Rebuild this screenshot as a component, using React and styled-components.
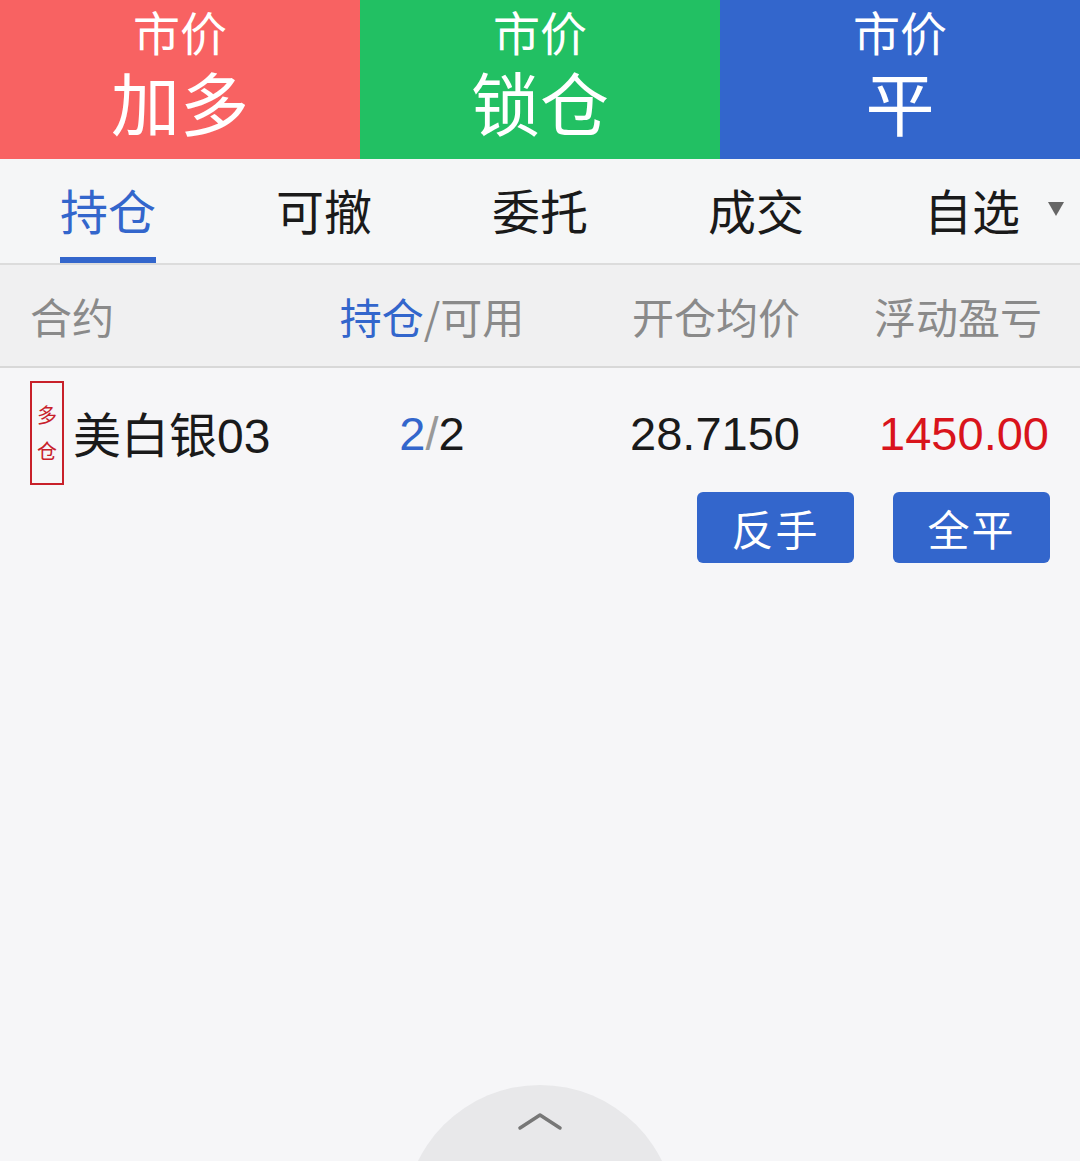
import React from "react";
import styled, { createGlobalStyle } from "styled-components";

const Global = createGlobalStyle`
  html, body { margin: 0; padding: 0; background: #f6f6f8; }
  body { font-family: "Liberation Sans", "Noto Sans CJK SC", sans-serif; }
  * { box-sizing: border-box; }
`;

const Page = styled.div`
  width: 1080px;
  height: 1161px;
  background: #f6f6f8;
  display: flex;
  flex-direction: column;
  position: relative;
  overflow: hidden;
`;

const ActionBar = styled.div`
  display: grid;
  grid-template-columns: repeat(3, 1fr);
  height: 159px;
`;

const ActionButton = styled.div`
  background: ${(p) => p.$bg};
  color: #fff;
  display: flex;
  flex-direction: column;
  align-items: center;
  padding-top: 8px;
  gap: 13px;
  font-family: "Noto Sans CJK SC", sans-serif;
`;

const ActionSmall = styled.div`
  font-size: 47px;
  line-height: 46px;
`;

const ActionBig = styled.div`
  font-size: 69px;
  line-height: 68px;
`;

const Tabs = styled.div`
  display: grid;
  grid-template-columns: repeat(5, 1fr);
  height: 106px;
  background: #f5f6f7;
  border-bottom: 2px solid #dcdcdc;
`;

const Tab = styled.div`
  position: relative;
  display: flex;
  align-items: center;
  justify-content: center;
  font-family: "Noto Sans CJK SC", sans-serif;
  font-size: 48px;
  color: ${(p) => (p.$active ? "#3366cc" : "#1a1a1a")};
  padding-bottom: 4px;
  &::after {
    content: "";
    display: ${(p) => (p.$active ? "block" : "none")};
    position: absolute;
    bottom: 0;
    left: 60px;
    width: 96px;
    height: 6px;
    background: #3366cc;
  }
`;

const Caret = styled.span`
  position: absolute;
  right: 16px;
  top: 43px;
  width: 0;
  height: 0;
  border-left: 8px solid transparent;
  border-right: 8px solid transparent;
  border-top: 14px solid #666;
`;

const Row = styled.div`
  display: grid;
  grid-template-columns: 282px 240px 248px 1fr;
  padding: 0 31px 0 30px;
  align-items: center;
`;

const HeaderRow = styled(Row)`
  height: 103px;
  background: #f0f0f1;
  border-bottom: 2px solid #d8d8d8;
  color: #8a8a8a;
  font-family: "Noto Sans CJK SC", sans-serif;
  font-size: 42px;
  padding-right: 38px;
`;

const Cell = styled.div`
  text-align: ${(p) => p.$align || "left"};
  white-space: nowrap;
`;

const Blue = styled.span`
  color: #3366cc;
`;

const DataRow = styled(Row)`
  padding-top: 13px;
  font-size: 47px;
  color: #1a1a1a;
  align-items: center;
`;

const NameCell = styled.div`
  display: flex;
  align-items: center;
  gap: 9px;
`;

const Badge = styled.div`
  width: 34px;
  height: 104px;
  border: 2px solid #c8202a;
  color: #c8202a;
  display: flex;
  flex-direction: column;
  align-items: center;
  justify-content: center;
  font-family: "Noto Sans CJK SC", sans-serif;
  font-size: 20px;
  line-height: 36px;
`;

const Name = styled.span`
  font-family: "Liberation Sans", "Noto Sans CJK SC", sans-serif;
  font-size: 48px;
  margin-top: -2px;
`;

const Slash = styled.span`
  color: #999;
`;

const Red = styled.span`
  color: #d9141c;
`;

const ButtonRow = styled.div`
  display: flex;
  justify-content: flex-end;
  gap: 39px;
  padding: 7px 30px 0 0;
`;

const SmallButton = styled.div`
  width: 157px;
  height: 71px;
  border-radius: 6px;
  background: #3366cc;
  color: #fff;
  display: flex;
  align-items: center;
  justify-content: center;
  font-family: "Noto Sans CJK SC", sans-serif;
  font-size: 42px;
  letter-spacing: 2px;
`;

const Pull = styled.div`
  position: absolute;
  left: 404px;
  top: 1085px;
  width: 272px;
  height: 272px;
  border-radius: 50%;
  background: #e8e8ea;
  display: flex;
  justify-content: center;
  padding-top: 26px;
`;

export default function App() {
  return (
    <Page>
      <Global />
      <ActionBar>
        <ActionButton $bg="#f86262">
          <ActionSmall>市价</ActionSmall>
          <ActionBig>加多</ActionBig>
        </ActionButton>
        <ActionButton $bg="#22c063">
          <ActionSmall>市价</ActionSmall>
          <ActionBig>锁仓</ActionBig>
        </ActionButton>
        <ActionButton $bg="#3366cc">
          <ActionSmall>市价</ActionSmall>
          <ActionBig>平</ActionBig>
        </ActionButton>
      </ActionBar>
      <Tabs>
        <Tab $active>持仓</Tab>
        <Tab>可撤</Tab>
        <Tab>委托</Tab>
        <Tab>成交</Tab>
        <Tab>
          自选
          <Caret />
        </Tab>
      </Tabs>
      <HeaderRow>
        <Cell>合约</Cell>
        <Cell $align="center">
          <Blue>持仓</Blue>/可用
        </Cell>
        <Cell $align="right">开仓均价</Cell>
        <Cell $align="right">浮动盈亏</Cell>
      </HeaderRow>
      <DataRow>
        <NameCell>
          <Badge>
            <span>多</span>
            <span>仓</span>
          </Badge>
          <Name>美白银03</Name>
        </NameCell>
        <Cell $align="center">
          <Blue>2</Blue>
          <Slash>/</Slash>2
        </Cell>
        <Cell $align="right">28.7150</Cell>
        <Cell $align="right">
          <Red>1450.00</Red>
        </Cell>
      </DataRow>
      <ButtonRow>
        <SmallButton>反手</SmallButton>
        <SmallButton>全平</SmallButton>
      </ButtonRow>
      <Pull>
        <svg width="46" height="20" viewBox="0 0 46 20">
          <polyline points="3,17 23,4 43,17" fill="none" stroke="#777" strokeWidth="3.5" strokeLinecap="round" strokeLinejoin="round" />
        </svg>
      </Pull>
    </Page>
  );
}
